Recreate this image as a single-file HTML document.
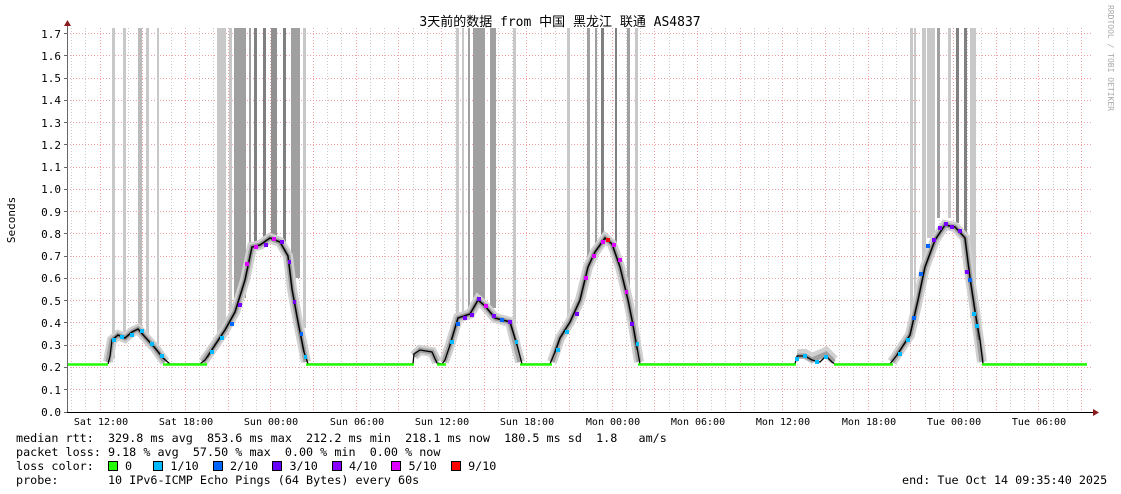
<!DOCTYPE html>
<html><head><meta charset="utf-8">
<style>
html,body{margin:0;padding:0;background:#fff;}
body{width:1121px;height:494px;overflow:hidden;position:relative;}
svg{position:absolute;left:0;top:0;}
text{font-family:"DejaVu Sans Mono","Liberation Mono","Noto Sans CJK SC",monospace;font-size:11px;fill:#000;}
.leg{position:absolute;left:16px;margin:0;font-family:"DejaVu Sans Mono","Liberation Mono",monospace;font-size:11.75px;line-height:14px;white-space:pre;color:#000;}
.sq{display:inline-block;width:8px;height:8px;border:1px solid #000;vertical-align:-1px;}
</style></head><body>
<svg width="1121" height="494" viewBox="0 0 1121 494" xmlns="http://www.w3.org/2000/svg">
<g stroke="#ccc" stroke-width="1" stroke-dasharray="1,2">
<path d="M71.5 28V412M85.5 28V412M114.5 28V412M128.5 28V412M157.5 28V412M171.5 28V412M199.5 28V412M213.5 28V412M242.5 28V412M256.5 28V412M285.5 28V412M299.5 28V412M327.5 28V412M341.5 28V412M370.5 28V412M384.5 28V412M413.5 28V412M427.5 28V412M455.5 28V412M469.5 28V412M498.5 28V412M512.5 28V412M541.5 28V412M555.5 28V412M583.5 28V412M597.5 28V412M626.5 28V412M640.5 28V412M669.5 28V412M683.5 28V412M711.5 28V412M725.5 28V412M754.5 28V412M768.5 28V412M797.5 28V412M811.5 28V412M839.5 28V412M853.5 28V412M882.5 28V412M896.5 28V412M925.5 28V412M939.5 28V412M967.5 28V412M981.5 28V412M1010.5 28V412M1024.5 28V412M1053.5 28V412M1067.5 28V412"/>
</g>
<g stroke="#f0a0a0" stroke-width="1" stroke-dasharray="1,2">
<path d="M100.5 28V412M142.5 28V412M185.5 28V412M228.5 28V412M270.5 28V412M313.5 28V412M356.5 28V412M398.5 28V412M441.5 28V412M484.5 28V412M526.5 28V412M569.5 28V412M612.5 28V412M654.5 28V412M697.5 28V412M740.5 28V412M782.5 28V412M825.5 28V412M868.5 28V412M910.5 28V412M953.5 28V412M996.5 28V412M1038.5 28V412M1081.5 28V412"/>
</g>
<g stroke="#f0a0a0" stroke-width="1" stroke-dasharray="1,2">
<path d="M67 389.5H1093M67 367.5H1093M67 345.5H1093M67 322.5H1093M67 300.5H1093M67 278.5H1093M67 256.5H1093M67 233.5H1093M67 211.5H1093M67 189.5H1093M67 167.5H1093M67 144.5H1093M67 122.5H1093M67 100.5H1093M67 78.5H1093M67 55.5H1093M67 33.5H1093"/>
</g>
<g>
<rect x="112" y="28" width="3" height="330" fill="#c8c8c8"/>
<rect x="123" y="28" width="3" height="310" fill="#c8c8c8"/>
<rect x="138" y="28" width="4" height="300" fill="#bbb"/>
<rect x="146" y="28" width="3" height="310" fill="#c8c8c8"/>
<rect x="157" y="28" width="2" height="320" fill="#c8c8c8"/>
<rect x="217" y="28" width="9" height="310" fill="#c8c8c8"/>
<rect x="229" y="28" width="3" height="290" fill="#c8c8c8"/>
<rect x="234" y="28" width="12" height="270" fill="#a0a0a0"/>
<rect x="249" y="28" width="2" height="220" fill="#a0a0a0"/>
<rect x="254" y="28" width="3" height="215" fill="#808080"/>
<rect x="263" y="28" width="3" height="212" fill="#808080"/>
<rect x="271" y="28" width="6" height="210" fill="#909090"/>
<rect x="283" y="28" width="3" height="215" fill="#808080"/>
<rect x="291" y="28" width="9" height="250" fill="#a0a0a0"/>
<rect x="303" y="28" width="3" height="300" fill="#c8c8c8"/>
<rect x="456" y="28" width="3" height="290" fill="#c8c8c8"/>
<rect x="462" y="28" width="2" height="290" fill="#c8c8c8"/>
<rect x="468" y="28" width="2" height="285" fill="#a0a0a0"/>
<rect x="473" y="28" width="12" height="275" fill="#a0a0a0"/>
<rect x="490" y="28" width="6" height="280" fill="#a0a0a0"/>
<rect x="513" y="28" width="3" height="300" fill="#c8c8c8"/>
<rect x="567" y="28" width="3" height="300" fill="#c8c8c8"/>
<rect x="587" y="28" width="3" height="250" fill="#a0a0a0"/>
<rect x="595" y="28" width="2" height="220" fill="#a0a0a0"/>
<rect x="601" y="28" width="3" height="212" fill="#808080"/>
<rect x="615" y="28" width="2" height="220" fill="#808080"/>
<rect x="627" y="28" width="3" height="265" fill="#a0a0a0"/>
<rect x="635" y="28" width="3" height="295" fill="#c8c8c8"/>
<rect x="910" y="28" width="3" height="290" fill="#c8c8c8"/>
<rect x="914" y="28" width="2" height="280" fill="#c8c8c8"/>
<rect x="922" y="28" width="4" height="250" fill="#c8c8c8"/>
<rect x="927" y="28" width="8" height="210" fill="#c8c8c8"/>
<rect x="937" y="28" width="3" height="190" fill="#a0a0a0"/>
<rect x="948" y="28" width="3" height="190" fill="#c8c8c8"/>
<rect x="956" y="28" width="3" height="195" fill="#808080"/>
<rect x="964" y="28" width="3" height="240" fill="#808080"/>
<rect x="970" y="28" width="6" height="290" fill="#c8c8c8"/>
</g>
<g fill="none" stroke-linejoin="miter" stroke-linecap="butt">
<g stroke="#d0d0d0" stroke-width="10">
<polyline points="108,362 112,340 118,335 125,338 132,332 138,329 145,337 155,348 165,362"/>
<polyline points="203,362 215,345 225,330 235,312 245,280 252,247 260,245 270,238 280,242 288,256 292,289 298,322 306,362"/>
<polyline points="414,356 420,350 432,352 437,362"/>
<polyline points="444,362 450,345 458,318 470,314 478,300 485,306 495,318 510,322 520,362"/>
<polyline points="552,362 560,338 570,322 580,300 588,267 595,252 605,238 612,244 620,267 628,300 633,325 639,362"/>
<polyline points="797,354 805,354 812,358 826,352 834,360"/>
<polyline points="892,362 910,335 918,300 925,267 935,240 945,225 955,227 965,238 970,278 975,311 982,362"/>
</g>
<g stroke="#a0a0a0" stroke-width="5">
<polyline points="108,362 112,340 118,335 125,338 132,332 138,329 145,337 155,348 165,362"/>
<polyline points="203,362 215,345 225,330 235,312 245,280 252,247 260,245 270,238 280,242 288,256 292,289 298,322 306,362"/>
<polyline points="414,356 420,350 432,352 437,362"/>
<polyline points="444,362 450,345 458,318 470,314 478,300 485,306 495,318 510,322 520,362"/>
<polyline points="552,362 560,338 570,322 580,300 588,267 595,252 605,238 612,244 620,267 628,300 633,325 639,362"/>
<polyline points="797,356 805,356 812,360 826,354 834,362"/>
<polyline points="892,362 910,335 918,300 925,267 935,240 945,225 955,227 965,238 970,278 975,311 982,362"/>
</g>
<g stroke="#606060" stroke-width="2">
<polyline points="112,340 118,335 125,338 132,332 138,329 145,337 155,348 163,358"/>
<polyline points="207,358 215,345 225,330 235,312 245,280 252,247 260,245 270,238 280,242 288,256 292,289 298,322 304,352"/>
<polyline points="450,345 458,318 470,314 478,300 485,306 495,318 510,322 517,345"/>
<polyline points="555,352 560,338 570,322 580,300 588,267 595,252 605,238 612,244 620,267 628,300 633,325 637,350"/>
<polyline points="897,355 910,335 918,300 925,267 935,240 945,225 955,227 965,238 970,278 975,311 979,340"/>
</g>
</g>
<polyline fill="none" stroke="#000" stroke-width="1.3" points="108,364 110,356 112,340 118,335 125,338 132,332 138,329 145,337 155,348 163,358 170,364 200,364 205,360 215,345 225,330 235,312 245,280 252,247 260,245 270,238 280,242 288,256 292,289 298,322 304,352 308,364 413,364 414,354 420,350 432,352 437,363 442,364 445,360 450,345 458,318 470,314 478,300 485,306 495,318 510,322 517,345 522,364 550,364 555,352 560,338 570,322 580,300 588,267 595,252 605,238 612,244 620,267 628,300 633,325 640,364 795,364 797,356 805,356 812,360 820,362 826,356 832,362 835,364 890,364 897,355 910,335 918,300 925,267 935,240 945,225 955,227 965,238 970,278 975,311 980,340 983,364 1087,364"/>
<g stroke="#22ff00" stroke-width="2.5" fill="none">
<path d="M67 364.5H108M163 364.5H207M306 364.5H414M437 364.5H446M520 364.5H552M638 364.5H796M834 364.5H893M982 364.5H1087"/>
</g>
<g>
<rect x="112" y="338" width="4" height="4" fill="#00bbff"/><rect x="120" y="335" width="4" height="4" fill="#00bbff"/><rect x="130" y="333" width="4" height="4" fill="#00bbff"/><rect x="140" y="329" width="4" height="4" fill="#00bbff"/><rect x="150" y="342" width="4" height="4" fill="#00bbff"/><rect x="160" y="354" width="4" height="4" fill="#00bbff"/>
<rect x="210" y="350" width="4" height="4" fill="#00bbff"/><rect x="220" y="336" width="4" height="4" fill="#00bbff"/><rect x="230" y="322" width="4" height="4" fill="#0066ff"/><rect x="238" y="303" width="4" height="4" fill="#7700ff"/><rect x="245" y="262" width="4" height="4" fill="#dd00ff"/><rect x="254" y="245" width="4" height="4" fill="#dd00ff"/><rect x="264" y="243" width="4" height="4" fill="#7700ff"/><rect x="272" y="237" width="4" height="4" fill="#dd00ff"/><rect x="280" y="240" width="4" height="4" fill="#7700ff"/><rect x="288" y="260" width="3" height="4" fill="#7700ff"/><rect x="293" y="300" width="3" height="4" fill="#7700ff"/><rect x="300" y="332" width="3" height="4" fill="#0066ff"/><rect x="304" y="355" width="3" height="4" fill="#00bbff"/>
<rect x="450" y="340" width="4" height="4" fill="#00bbff"/><rect x="456" y="322" width="4" height="4" fill="#0066ff"/><rect x="463" y="316" width="4" height="4" fill="#7700ff"/><rect x="470" y="313" width="4" height="4" fill="#7700ff"/><rect x="477" y="297" width="4" height="4" fill="#7700ff"/><rect x="484" y="304" width="4" height="4" fill="#dd00ff"/><rect x="492" y="314" width="4" height="4" fill="#7700ff"/><rect x="500" y="318" width="4" height="4" fill="#0066ff"/><rect x="508" y="320" width="4" height="4" fill="#7700ff"/><rect x="515" y="340" width="3" height="4" fill="#00bbff"/>
<rect x="556" y="348" width="4" height="4" fill="#00bbff"/><rect x="565" y="330" width="4" height="4" fill="#00bbff"/><rect x="575" y="312" width="4" height="4" fill="#7700ff"/><rect x="584" y="276" width="4" height="4" fill="#dd00ff"/><rect x="592" y="254" width="4" height="4" fill="#dd00ff"/><rect x="601" y="240" width="4" height="4" fill="#dd00ff"/><rect x="606" y="238" width="4" height="4" fill="#ff0000"/><rect x="612" y="243" width="4" height="4" fill="#dd00ff"/><rect x="618" y="258" width="4" height="4" fill="#dd00ff"/><rect x="625" y="290" width="3" height="4" fill="#dd00ff"/><rect x="630" y="322" width="4" height="4" fill="#7700ff"/><rect x="636" y="342" width="3" height="4" fill="#00bbff"/>
<rect x="795" y="357" width="4" height="4" fill="#00bbff"/><rect x="803" y="354" width="4" height="4" fill="#00bbff"/><rect x="815" y="360" width="4" height="4" fill="#00bbff"/><rect x="824" y="355" width="4" height="4" fill="#00bbff"/>
<rect x="898" y="352" width="4" height="4" fill="#00bbff"/><rect x="906" y="338" width="4" height="4" fill="#00bbff"/><rect x="912" y="316" width="4" height="4" fill="#0066ff"/><rect x="919" y="272" width="4" height="4" fill="#0066ff"/><rect x="926" y="244" width="4" height="4" fill="#0066ff"/><rect x="932" y="238" width="4" height="4" fill="#7700ff"/><rect x="938" y="226" width="4" height="4" fill="#7700ff"/><rect x="944" y="222" width="4" height="4" fill="#7700ff"/><rect x="950" y="225" width="4" height="4" fill="#7700ff"/><rect x="958" y="229" width="4" height="4" fill="#7700ff"/><rect x="965" y="270" width="4" height="4" fill="#7700ff"/><rect x="968" y="278" width="4" height="4" fill="#0066ff"/><rect x="972" y="312" width="4" height="4" fill="#00bbff"/><rect x="975" y="324" width="4" height="4" fill="#00bbff"/>
</g>
<path d="M67.5 26V412" stroke="#666" stroke-width="1"/>
<path d="M64 412.5H1093" stroke="#000" stroke-width="1"/>
<polygon points="64,26 71,26 67.5,20" fill="#8b1a1a"/>
<polygon points="1093,409 1093,416 1099,412.5" fill="#8b1a1a"/>
<g stroke="#666"><path d="M64 389.5H67M64 367.5H67M64 345.5H67M64 322.5H67M64 300.5H67M64 278.5H67M64 256.5H67M64 233.5H67M64 211.5H67M64 189.5H67M64 167.5H67M64 144.5H67M64 122.5H67M64 100.5H67M64 78.5H67M64 55.5H67M64 33.5H67M64 412.5H67"/></g>
<g text-anchor="end">
<text x="61" y="416">0.0</text><text x="61" y="394">0.1</text><text x="61" y="371">0.2</text><text x="61" y="349">0.3</text><text x="61" y="327">0.4</text><text x="61" y="305">0.5</text><text x="61" y="282">0.6</text><text x="61" y="260">0.7</text><text x="61" y="238">0.8</text><text x="61" y="216">0.9</text><text x="61" y="193">1.0</text><text x="61" y="171">1.1</text><text x="61" y="149">1.2</text><text x="61" y="127">1.3</text><text x="61" y="104">1.4</text><text x="61" y="82">1.5</text><text x="61" y="60">1.6</text><text x="61" y="38">1.7</text>
</g>
<g text-anchor="middle" style="font-size:10px">
<text x="101" y="425" style="font-size:10px">Sat 12:00</text><text x="186" y="425" style="font-size:10px">Sat 18:00</text><text x="271" y="425" style="font-size:10px">Sun 00:00</text><text x="357" y="425" style="font-size:10px">Sun 06:00</text><text x="442" y="425" style="font-size:10px">Sun 12:00</text><text x="527" y="425" style="font-size:10px">Sun 18:00</text><text x="613" y="425" style="font-size:10px">Mon 00:00</text><text x="698" y="425" style="font-size:10px">Mon 06:00</text><text x="783" y="425" style="font-size:10px">Mon 12:00</text><text x="869" y="425" style="font-size:10px">Mon 18:00</text><text x="954" y="425" style="font-size:10px">Tue 00:00</text><text x="1039" y="425" style="font-size:10px">Tue 06:00</text>
</g>
<text x="560" y="26" text-anchor="middle" style="font-size:13px">3天前的数据 from 中国 黑龙江 联通 AS4837</text>
<text transform="translate(15,220) rotate(-90)" text-anchor="middle" style="font-size:11px">Seconds</text>
<text transform="translate(1108,5) rotate(90)" style="font-size:8px;fill:#aaa">RRDTOOL / TOBI OETIKER</text>
</svg>
<pre class="leg" style="top:431px">median rtt:  329.8 ms avg  853.6 ms max  212.2 ms min  218.1 ms now  180.5 ms sd  1.8   am/s</pre>
<pre class="leg" style="top:445px">packet loss: 9.18 % avg  57.50 % max  0.00 % min  0.00 % now</pre>
<pre class="leg" style="top:459px">loss color:  <span class="sq" style="background:#22ff00"></span> 0   <span class="sq" style="background:#00bbff"></span> 1/10  <span class="sq" style="background:#0066ff"></span> 2/10  <span class="sq" style="background:#6600ff"></span> 3/10  <span class="sq" style="background:#8800ff"></span> 4/10  <span class="sq" style="background:#dd00ff"></span> 5/10  <span class="sq" style="background:#ff0000"></span> 9/10</pre>
<pre class="leg" style="top:473px">probe:       10 IPv6-ICMP Echo Pings (64 Bytes) every 60s</pre>
<pre class="leg" style="top:473px;left:902px">end: Tue Oct 14 09:35:40 2025</pre>
</body></html>
